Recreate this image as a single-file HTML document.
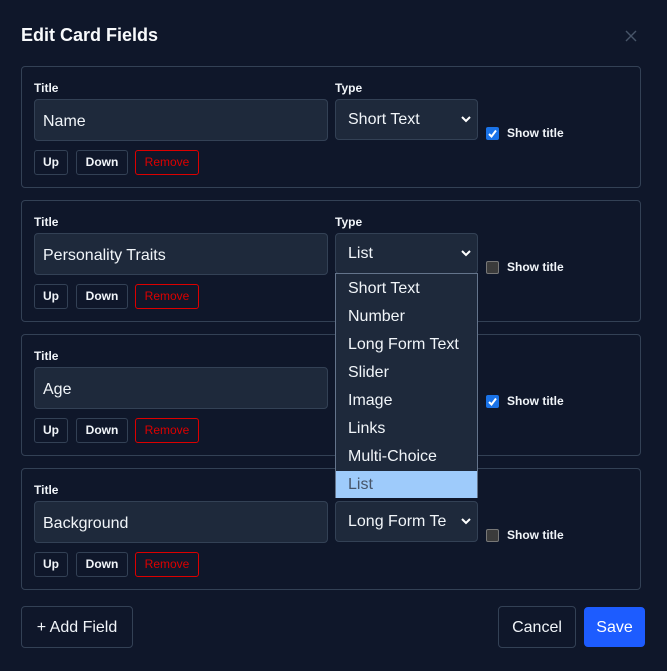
<!DOCTYPE html>
<html><head><style>
*{box-sizing:border-box;margin:0;padding:0}
body{width:667px;height:671px;background:#0f172a;font-family:"Liberation Sans",Arial,sans-serif;color:#f1f5f9;position:relative;overflow:hidden}
.a{position:absolute}
h1{position:absolute;left:21px;top:25px;font-size:18px;font-weight:bold;color:#f8fafc}
.card{position:absolute;left:21px;width:620px;height:122px;border:1px solid #334155;border-radius:4px}
.lbl{position:absolute;font-size:12px;font-weight:bold;color:#f1f5f9}
.inp{position:absolute;left:12px;top:32px;width:294px;height:42px;background:#1e293b;border:1px solid #334155;border-radius:4px;font-size:16px;padding:13px 8px;color:#f1f5f9}
.sel{position:absolute;left:313px;top:32px;width:143px;height:41px;background:#1e293b;border:1px solid #334155;border-radius:4px;font-size:16px;padding:11px 12px;white-space:nowrap;overflow:hidden}
.sel svg{position:absolute;right:6px;top:15px;background:#1e293b}
.chk{position:absolute;left:464px;top:60px;width:13px;height:13px;border-radius:2px}
.on{background:#1a73e8}
.off{background:#3b3b3b;border:1px solid #777}
.st{position:absolute;left:485px;top:59px;font-size:12px;font-weight:bold}
.btn{position:absolute;top:83px;height:25px;border:1px solid #334155;border-radius:3px;font-size:12px;font-weight:bold;text-align:center;line-height:23px}
.rm{border-color:#dc0000;color:#dc0000;font-weight:normal}
.dd{position:absolute;left:335px;top:273px;width:143px;height:225px;background:#1e293b;border:1px solid #64748b;padding-top:1px}
.dd div{height:28px;line-height:28px;padding-left:12px;font-size:16px}
.fb{position:absolute;border:1px solid #334155;border-radius:4px;font-size:16px;text-align:center}
</style></head><body>
<h1>Edit Card Fields</h1>
<svg class="a" style="left:625px;top:30px" width="12" height="12"><path d="M1 1L11 11M11 1L1 11" stroke="#475569" stroke-width="1.4"/></svg>

<div class="card" style="top:66px">
<div class="lbl" style="left:12px;top:14px">Title</div><div class="lbl" style="left:313px;top:14px">Type</div>
<div class="inp">Name</div>
<div class="sel">Short Text<svg width="10" height="8"><path d="M1 2L5 6L9 2" stroke="#fff" stroke-width="2" fill="none"/></svg></div>
<div class="chk on"><svg width="13" height="13"><path d="M3 7L5.5 9.5L10 3.5" stroke="#fff" stroke-width="2" fill="none"/></svg></div><div class="st">Show title</div>
<div class="btn" style="left:12px;width:34px">Up</div><div class="btn" style="left:54px;width:52px">Down</div><div class="btn rm" style="left:113px;width:64px">Remove</div>
</div>

<div class="card" style="top:200px">
<div class="lbl" style="left:12px;top:14px">Title</div><div class="lbl" style="left:313px;top:14px">Type</div>
<div class="inp">Personality Traits</div>
<div class="sel">List<svg width="10" height="8"><path d="M1 2L5 6L9 2" stroke="#fff" stroke-width="2" fill="none"/></svg></div>
<div class="chk off"></div><div class="st">Show title</div>
<div class="btn" style="left:12px;width:34px">Up</div><div class="btn" style="left:54px;width:52px">Down</div><div class="btn rm" style="left:113px;width:64px">Remove</div>
</div>

<div class="card" style="top:334px">
<div class="lbl" style="left:12px;top:14px">Title</div>
<div class="inp">Age</div>
<div class="chk on"><svg width="13" height="13"><path d="M3 7L5.5 9.5L10 3.5" stroke="#fff" stroke-width="2" fill="none"/></svg></div><div class="st">Show title</div>
<div class="btn" style="left:12px;width:34px">Up</div><div class="btn" style="left:54px;width:52px">Down</div><div class="btn rm" style="left:113px;width:64px">Remove</div>
</div>

<div class="card" style="top:468px">
<div class="lbl" style="left:12px;top:14px">Title</div>
<div class="inp">Background</div>
<div class="sel">Long Form Te<svg width="10" height="8"><path d="M1 2L5 6L9 2" stroke="#fff" stroke-width="2" fill="none"/></svg></div>
<div class="chk off"></div><div class="st">Show title</div>
<div class="btn" style="left:12px;width:34px">Up</div><div class="btn" style="left:54px;width:52px">Down</div><div class="btn rm" style="left:113px;width:64px">Remove</div>
</div>

<div class="dd">
<div>Short Text</div><div>Number</div><div>Long Form Text</div><div>Slider</div><div>Image</div><div>Links</div><div>Multi-Choice</div><div style="background:#9ecbfb;color:#475569;height:27px">List</div>
</div>

<div class="fb" style="left:21px;top:606px;width:112px;height:42px;line-height:42px">+ Add Field</div>
<div class="fb" style="left:498px;top:606px;width:78px;height:42px;line-height:42px">Cancel</div>
<div class="fb" style="left:584px;top:607px;width:61px;height:40px;line-height:40px;background:#1d5cff;border-color:#1d5cff;color:#fff">Save</div>
</body></html>
